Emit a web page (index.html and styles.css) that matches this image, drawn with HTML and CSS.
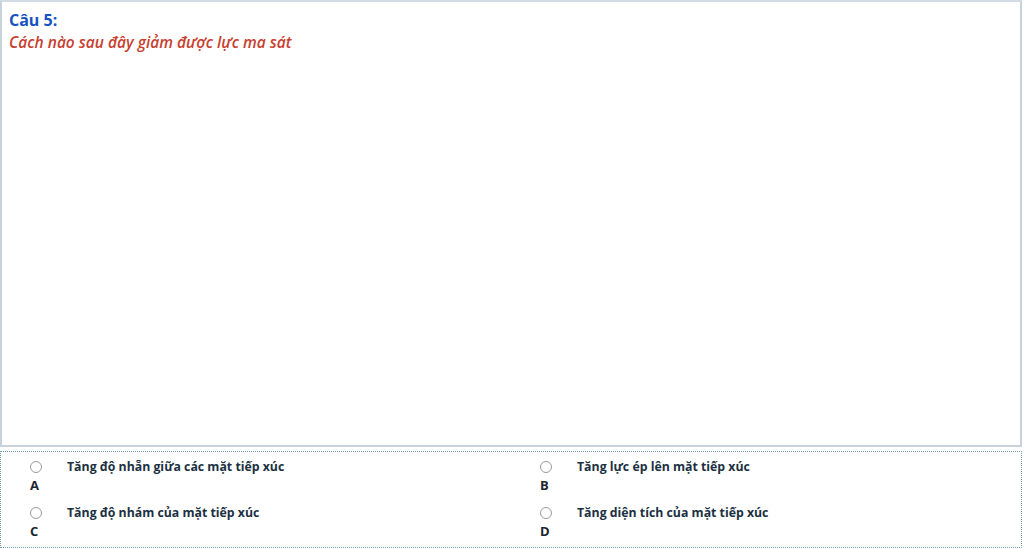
FILE: index.html
```html
<!DOCTYPE html>
<html lang="vi">
<head>
<meta charset="utf-8">
<link rel="stylesheet" href="styles.css">
</head>
<body>
<div class="page">
  <section class="question">
    <div class="q-num">Câu 5:</div>
    <div class="q-text">Cách nào sau đây giảm được lực ma sát</div>
  </section>
  <section class="answers">
    <label class="opt">
      <span class="radio"></span>
      <span class="opt-text">Tăng độ nhẵn giữa các mặt tiếp xúc</span>
      <span class="letter">A</span>
    </label>
    <label class="opt">
      <span class="radio"></span>
      <span class="opt-text">Tăng lực ép lên mặt tiếp xúc</span>
      <span class="letter">B</span>
    </label>
    <label class="opt">
      <span class="radio"></span>
      <span class="opt-text">Tăng độ nhám của mặt tiếp xúc</span>
      <span class="letter">C</span>
    </label>
    <label class="opt">
      <span class="radio"></span>
      <span class="opt-text">Tăng diện tích của mặt tiếp xúc</span>
      <span class="letter">D</span>
    </label>
  </section>
</div>
</body>
</html>
```

FILE: styles.css
```css
html, body {
  margin: 0;
  padding: 0;
  background: #fff;
}
body {
  font-family: "Open Sans", "Noto Sans", sans-serif;
  width: 1024px;
  height: 548px;
  overflow: hidden;
}
.page {
  width: 1022px;
  display: flex;
  flex-direction: column;
  gap: 4px;
}
.question {
  box-sizing: border-box;
  height: 447px;
  border: 2px solid #c8d2dd;
  border-top-color: #d3dce5;
  padding: 7px 7px;
}
.q-num {
  color: #1652c2;
  font-weight: 700;
  font-size: 16px;
  line-height: 22px;
}
.q-text {
  color: #c8402f;
  font-style: italic;
  font-weight: 600;
  font-size: 15.5px;
  line-height: 22px;
}
.answers {
  box-sizing: border-box;
  height: 97px;
  border: 1px dotted #6f9fa2;
  display: grid;
  grid-template-columns: 1fr 1fr;
  padding: 6px 0 0 0;
}
.opt {
  display: grid;
  grid-template-columns: 38px 1fr;
  grid-template-rows: 20px 26px;
  padding-left: 28px;
}
.radio {
  width: 10px;
  height: 10px;
  border: 1px solid #9a9a9a;
  border-radius: 50%;
  margin: 3px 0 0 1px;
  box-sizing: content-box;
}
.opt-text {
  font-size: 12.3px;
  font-weight: 700;
  color: #1b3142;
  line-height: 18px;
}
.letter {
  grid-column: 1;
  font-size: 13px;
  font-weight: 700;
  color: #1b2530;
  line-height: 18px;
  padding-left: 1px;
  margin-top: -2px;
}
```
